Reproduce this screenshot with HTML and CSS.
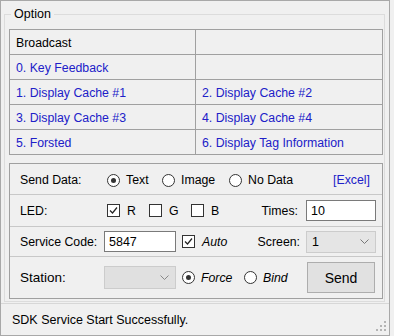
FILE: index.html
```html
<!DOCTYPE html>
<html>
<head>
<meta charset="utf-8">
<link rel="stylesheet" href="styles.css">
</head>
<body>
<div class="window">
  <fieldset class="group">
    <legend class="legend">Option</legend>
    <div class="grid">
      <div class="cell">Broadcast</div><div class="cell"></div>
      <div class="cell link">0. Key Feedback</div><div class="cell"></div>
      <div class="cell link">1. Display Cache #1</div><div class="cell link">2. Display Cache #2</div>
      <div class="cell link">3. Display Cache #3</div><div class="cell link">4. Display Cache #4</div>
      <div class="cell link">5. Forsted</div><div class="cell link">6. Display Tag Information</div>
    </div>
    <div class="panel">
      <div class="row r1">
        <span class="label lw87">Send Data:</span>
        <span class="opt w55"><span class="radio on"></span>Text</span>
        <span class="opt w67"><span class="radio"></span>Image</span>
        <span class="opt"><span class="radio"></span>No Data</span>
        <span class="excel">[Excel]</span>
      </div>
      <div class="row r2">
        <span class="label lw87">LED:</span>
        <span class="opt w42"><span class="check on"><svg width="11" height="11" viewBox="0 0 11 11"><polyline points="2,5.5 4.5,8 9,2.5" fill="none" stroke="#222" stroke-width="1.2"/></svg></span>R</span>
        <span class="opt w42"><span class="check"></span>G</span>
        <span class="opt"><span class="check"></span>B</span>
        <span class="label times">Times:</span>
        <span class="textbox tb-times">10</span>
      </div>
      <div class="row r3">
        <span class="label lw84">Service Code:</span>
        <span class="textbox tb-code">5847</span>
        <span class="opt w71"><span class="check on"><svg width="11" height="11" viewBox="0 0 11 11"><polyline points="2,5.5 4.5,8 9,2.5" fill="none" stroke="#222" stroke-width="1.2"/></svg></span><i>Auto</i></span>
        <span class="label screen">Screen:</span>
        <span class="combo cb-screen"><span class="cbtext">1</span><svg width="9" height="6" viewBox="0 0 9 6"><polyline points="0.5,0.5 4.5,4.5 8.5,0.5" fill="none" stroke="#777" stroke-width="1"/></svg></span>
      </div>
      <div class="row r4">
        <span class="label lw84 big">Station:</span>
        <span class="combo cb-station"><span class="cbtext"></span><svg width="9" height="6" viewBox="0 0 9 6"><polyline points="0.5,0.5 4.5,4.5 8.5,0.5" fill="none" stroke="#888" stroke-width="1"/></svg></span>
        <span class="opt w62"><span class="radio on"></span><i>Force</i></span>
        <span class="opt"><span class="radio"></span><i>Bind</i></span>
        <span class="button">Send</span>
      </div>
    </div>
  </fieldset>
  <div class="status">
    <span class="status-text">SDK Service Start Successfully.</span>
    <svg class="grip" width="12" height="12" viewBox="0 0 12 12">
      <rect x="9" y="1" width="2" height="2" fill="#b4b4b4"/>
      <rect x="5" y="5" width="2" height="2" fill="#b4b4b4"/>
      <rect x="9" y="5" width="2" height="2" fill="#b4b4b4"/>
      <rect x="1" y="9" width="2" height="2" fill="#b4b4b4"/>
      <rect x="5" y="9" width="2" height="2" fill="#b4b4b4"/>
      <rect x="9" y="9" width="2" height="2" fill="#b4b4b4"/>
    </svg>
  </div>
</div>
</body>
</html>
```

FILE: styles.css
```css
html, body {
  margin: 0;
  padding: 0;
  background: #f0f0f0;
}
body {
  width: 394px;
  height: 336px;
  overflow: hidden;
  font-family: "Liberation Sans", Arial, sans-serif;
  font-size: 12.3px;
  color: #000;
}
.window {
  box-sizing: border-box;
  width: 390px;
  height: 336px;
  border: 1px solid #a8a8a8;
  display: flex;
  flex-direction: column;
}
.group {
  margin: 6px 4px 0 3px;
  padding: 8px 1px 2px 4px;
  border: 1px solid #dcdcdc;
  min-width: 0;
}
.legend {
  padding: 0 3px;
  margin-left: 2px;
  line-height: 14px;
  font-size: 12.5px;
}
.grid {
  display: grid;
  grid-template-columns: 185px 186px;
  grid-auto-rows: 24px;
  gap: 1px;
  background: #a0a0a0;
  border: 1px solid #a0a0a0;
}
.cell {
  background: #f0f0f0;
  display: flex;
  align-items: center;
  padding-left: 6px;
  padding-top: 2px;
}
.link {
  color: #2020c8;
}
.panel {
  margin-top: 8px;
  border: 1px solid #a0a0a0;
  display: flex;
  flex-direction: column;
}
.row {
  display: flex;
  align-items: center;
  padding: 0 6px 0 10px;
  border-bottom: 1px solid #c8c8c8;
}
.r1 { height: 31px; padding-right: 12px; padding-top: 2px; box-sizing: border-box; }
.r2 { height: 31px; }
.r3 { height: 29px; }
.r4 { height: 41px; border-bottom: 0; }
.label { flex: none; }
.lw87 { width: 87px; }
.lw84 { width: 84px; }
.big { font-size: 13.5px; }
.opt {
  display: flex;
  align-items: center;
  flex: none;
}
.w55 { width: 55px; }
.w67 { width: 67px; }
.w42 { width: 42px; }
.w71 { width: 71px; }
.w62 { width: 62px; }
.radio {
  box-sizing: border-box;
  width: 13px;
  height: 13px;
  border: 1px solid #333;
  border-radius: 50%;
  background: #fff;
  margin-right: 6px;
  display: flex;
  align-items: center;
  justify-content: center;
}
.radio.on::after {
  content: "";
  width: 5px;
  height: 5px;
  border-radius: 50%;
  background: #333;
}
.check {
  box-sizing: border-box;
  width: 13px;
  height: 13px;
  border: 1px solid #333;
  background: #fff;
  margin-right: 7px;
  display: flex;
  align-items: center;
  justify-content: center;
}
.check svg { display: block; }
.excel {
  margin-left: auto;
  color: #2020c8;
}
.times { margin-left: auto; margin-right: 8px; }
.textbox {
  box-sizing: border-box;
  background: #fff;
  border: 1px solid #7a7a7a;
  display: flex;
  align-items: center;
  padding-left: 4px;
  font-size: 12.5px;
}
.tb-times { width: 70px; height: 21px; }
.tb-code { width: 72px; height: 21px; margin-right: 6px; }
.screen { margin-left: auto; margin-right: 6px; }
.combo {
  box-sizing: border-box;
  display: flex;
  align-items: center;
  justify-content: space-between;
  background: #e5e5e5;
  border: 1px solid #cccccc;
  padding: 0 6px 0 5px;
  font-size: 12.5px;
}
.cb-screen { width: 70px; height: 22px; }
.cb-station { width: 72px; height: 23px; margin-right: 6px; background: #e0e0e0; }
.button {
  box-sizing: border-box;
  margin-left: auto;
  width: 68px;
  height: 31px;
  background: #e1e1e1;
  border: 1px solid #adadad;
  display: flex;
  align-items: center;
  justify-content: center;
  font-size: 14px;
  margin-right: 1px;
}
.status {
  margin-top: 1px;
  border-top: 1px solid #d7d7d7;
  flex: 1;
  display: flex;
  align-items: center;
  padding-left: 11px;
}
.status-text {
  font-size: 12.5px;
  padding-top: 1px;
}
.grip {
  margin-left: auto;
  margin-right: 2px;
  align-self: flex-end;
  margin-bottom: 3px;
}
```
